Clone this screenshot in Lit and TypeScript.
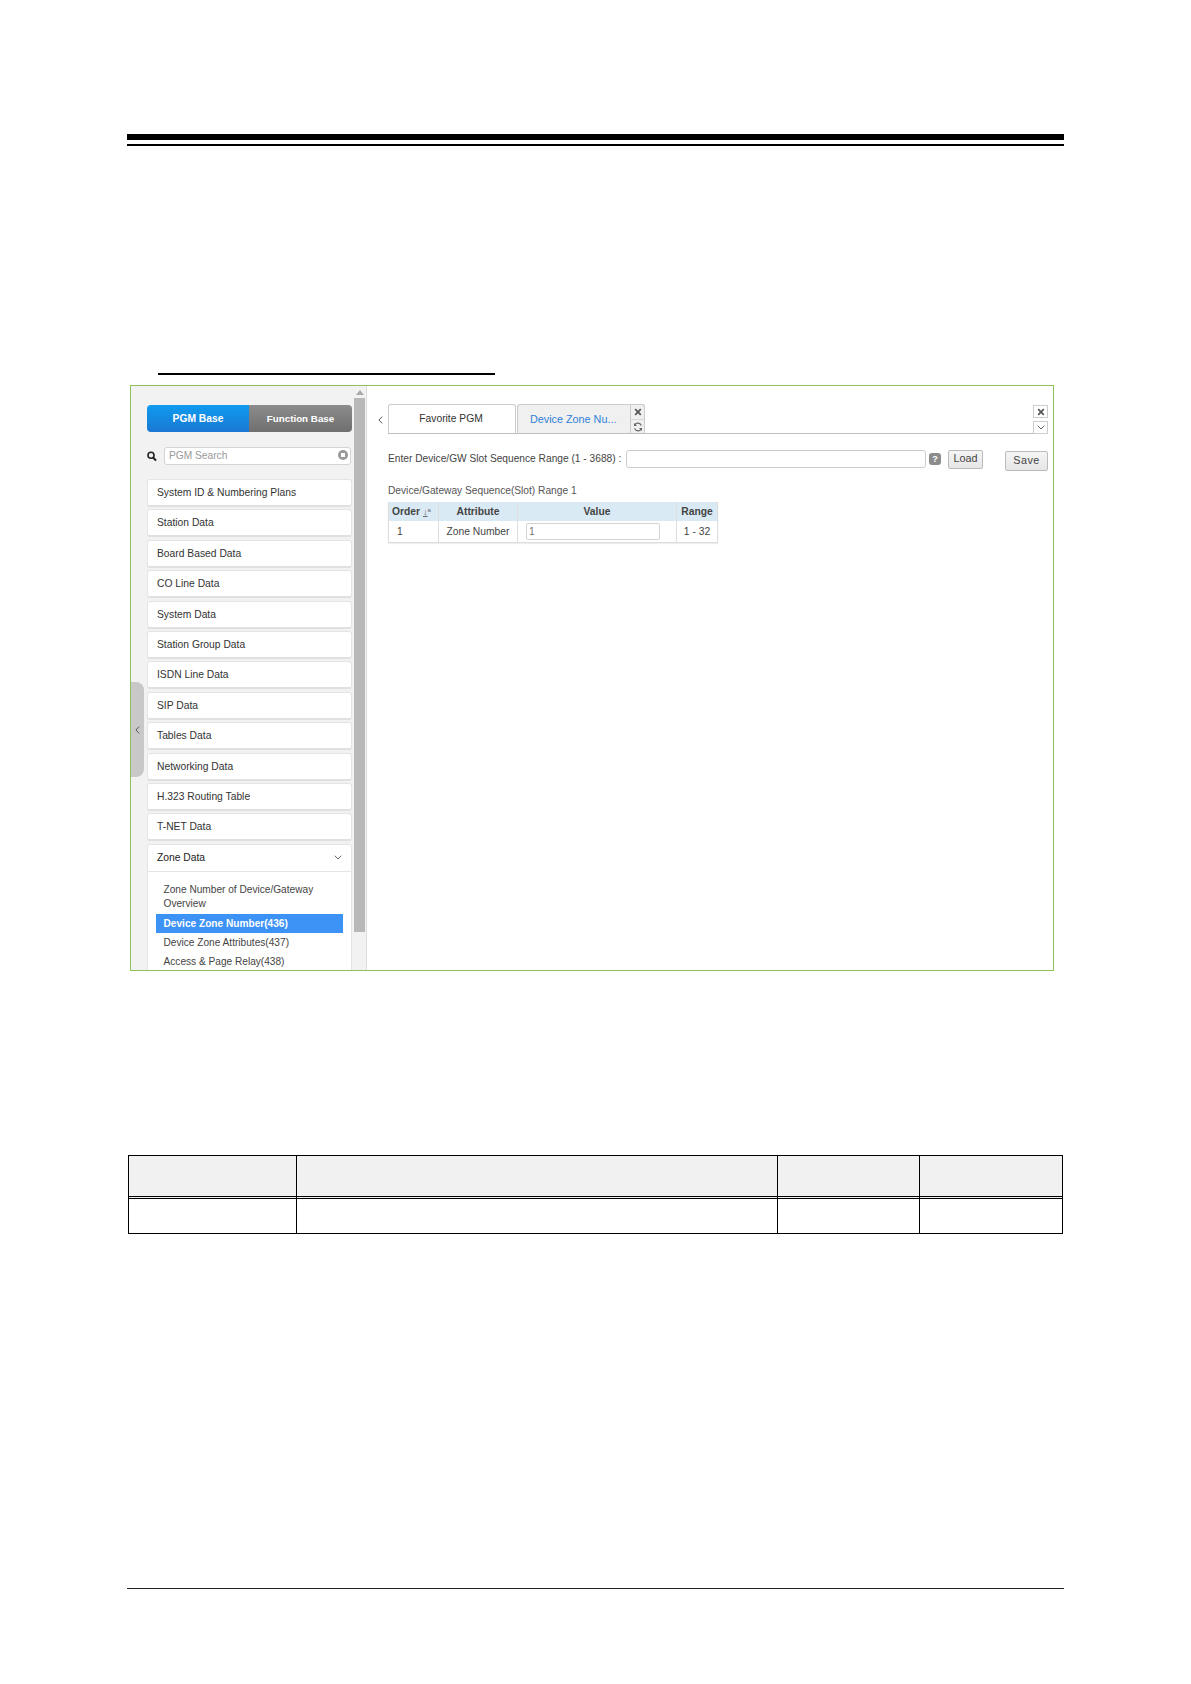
import { LitElement, html, css } from "lit";
import { customElement } from "lit/decorators.js";

const MENU = ["System ID & Numbering Plans","Station Data","Board Based Data","CO Line Data","System Data","Station Group Data","ISDN Line Data","SIP Data","Tables Data","Networking Data","H.323 Routing Table","T-NET Data"];

const closeIcon = html`<svg width="8" height="8" viewBox="0 0 8 8"><path d="M1.2 1.2l5.6 5.6M6.8 1.2L1.2 6.8" fill="none" stroke="#555" stroke-width="1.7"/></svg>`;
const chevDown = html`<svg width="8" height="5" viewBox="0 0 8 5"><path d="M.7.7 4 4 7.3.7" fill="none" stroke="#666" stroke-width="1"/></svg>`;
const chevLeft = html`<svg width="5" height="8" viewBox="0 0 5 8"><path d="M4.2.6.9 4l3.3 3.4" fill="none" stroke="#555" stroke-width="1"/></svg>`;
const refresh = html`<svg width="10" height="10" viewBox="0 0 10 10"><path d="M8.4 3.6A3.7 3.7 0 0 0 1.9 2.7M1.6 6.4A3.7 3.7 0 0 0 8.1 7.3" fill="none" stroke="#666" stroke-width="1.2"/><path d="M1 1v3h3zM9 9V6H6z" fill="#666"/></svg>`;

@customElement("app-root")
export class AppRoot extends LitElement {
  static styles = css`
    :host { display: block; width: 1191px; height: 1684px; background: #fff; font-family: "Liberation Sans", Arial, sans-serif; color: #333; overflow: hidden; }
    * { box-sizing: border-box; }
    .page { padding: 134px 127px 0 127px; width: 1191px; display: flex; flex-direction: column; }
    .thick { height: 6px; background: #000; width: 937px; }
    .thin { height: 2px; background: #000; width: 937px; margin-top: 4px; }
    .head-rule { height: 2px; background: #000; width: 337px; margin: 227px 0 0 31px; }
    .shot { position: relative; margin: 10px 0 0 3px; width: 924px; height: 586px; border: 1px solid #8dc45a; display: flex; }
    .side { width: 236px; flex: none; background: #f2f2f2; border-right: 1px solid #dcdcdc; position: relative; padding: 19px 15px 0 16px; overflow: hidden; }
    .pull { position: absolute; left: 0; top: 296px; width: 13px; height: 95px; background: #c8c8c8; border-radius: 0 8px 8px 0; display: flex; align-items: center; justify-content: center; }
    .sb { position: absolute; right: 1px; top: 0; bottom: 0; width: 11px; display: flex; flex-direction: column; align-items: center; }
    .sb .up { width: 0; height: 0; border: 4px solid transparent; border-bottom: 5px solid #aaa; border-top: 0; margin-top: 4px; margin-bottom: 3px; }
    .sb .thumb { width: 11px; height: 534px; background: #b8b8b8; }
    .seg { display: flex; width: 205px; height: 27px; border-radius: 4px; overflow: hidden; color: #fff; font-weight: bold; }
    .seg div { display: flex; align-items: center; justify-content: center; padding-bottom: 1px; }
    .seg .on { width: 102px; font-size: 10.3px; background: linear-gradient(#0f9bf0, #1a78d2); }
    .seg .off { flex: 1; font-size: 9.8px; background: linear-gradient(#8c8c8c, #6f6f6f); }
    .search { display: flex; align-items: center; height: 18px; margin-top: 15px; gap: 7px; }
    .search svg { flex: none; }
    .sinput { position: relative; flex: 1; height: 18px; background: #fff; border: 1px solid #d4d4d4; border-radius: 3px; color: #999; font-size: 10.2px; padding-left: 4px; line-height: 15px; }
    .sclear { position: absolute; right: 2px; top: 2px; width: 10px; height: 10px; border-radius: 50%; background: #999; display: flex; align-items: center; justify-content: center; }
    .sclear i { width: 4px; height: 4px; background: #fff; display: block; }
    .menu { margin-top: 14px; display: flex; flex-direction: column; gap: 2.4px; width: 205px; }
    .item { height: 28px; background: #fff; border: 1px solid #e4e4e4; border-bottom: 2px solid #e0e0e0; border-radius: 3px; font-size: 10.3px; line-height: 25px; padding-left: 9px; color: #333; flex: none; }
    .open { background: #fff; border: 1px solid #e4e4e4; border-radius: 3px 3px 0 0; flex: none; height: 140px; overflow: hidden; }
    .open .title { height: 27px; padding: 0 9px 1px; font-size: 10.3px; color: #222; border-bottom: 1px solid #e4e4e4; display: flex; justify-content: space-between; align-items: center; }
    .subs { padding: 11px 8px 0 8px; font-size: 10.15px; color: #444; }
    .sub { padding-left: 7.5px; line-height: 19px; height: 19px; white-space: nowrap; }
    .sub.two { height: 29px; line-height: 14.3px; margin-bottom: 2.5px; white-space: normal; }
    .sub.sel { background: #3d92f5; color: #fff; font-weight: bold; }
    .main { flex: 1; position: relative; padding: 19px 5px 0 21px; min-width: 0; }
    .tabbar { display: flex; align-items: flex-end; height: 29px; border-bottom: 1px solid #bfbfbf; position: relative; }
    .tback { position: absolute; left: -10px; top: 11px; display: flex; }
    .tab { height: 29px; border: 1px solid #ccc; border-bottom: none; border-radius: 3px 3px 0 0; font-size: 10.3px; display: flex; align-items: center; padding-bottom: 1px; }
    .tab.fav { width: 128px; background: #fff; color: #333; justify-content: center; padding-right: 2px; }
    .tab.cur { width: 128px; margin-left: 1px; background: #f0f0f0; color: #2f80d8; padding-left: 12px; position: relative; font-size: 10.8px; white-space: nowrap; }
    .tabctl { position: absolute; right: -1px; top: -1px; width: 15px; height: 29px; border: 1px solid #ccc; border-bottom: none; border-radius: 0 3px 0 0; display: flex; flex-direction: column; background: #f0f0f0; }
    .tabctl span { height: 14px; display: flex; align-items: center; justify-content: center; }
    .tabctl span + span { border-top: 1px solid #d8d8d8; }
    .winctl { position: absolute; right: 0; top: 0; display: flex; flex-direction: column; gap: 3px; }
    .winctl span { width: 15px; height: 13px; border: 1px solid #ccc; background: #fff; display: flex; align-items: center; justify-content: center; }
    .rangerow { display: flex; align-items: center; height: 18px; margin-top: 16px; font-size: 10.2px; color: #444; white-space: nowrap; position: relative; }
    .rlabel { width: 238px; flex: none; padding-bottom: 1px; }
    .rinput { width: 300px; height: 18px; border: 1px solid #ccc; border-radius: 3px; background: #fff; }
    .q { width: 12px; height: 12px; background: #8c8c8c; color: #fff; font-size: 9px; font-weight: bold; border-radius: 3px; margin-left: 3px; text-align: center; line-height: 12px; }
    .btn { border: 1px solid #bbb; border-radius: 2px; background: linear-gradient(#f5f5f5, #e6e6e6); color: #444; font-size: 10.8px; display: flex; align-items: center; justify-content: center; padding-bottom: 2px; }
    .load { width: 35px; height: 19px; margin-left: 7px; }
    .save { width: 43px; height: 20px; position: absolute; right: 0; top: 1px; letter-spacing: .5px; }
    .cap { font-size: 10.2px; color: #555; margin-top: 15px; line-height: 14px; padding-top: 1px; }
    .dt { display: grid; grid-template-columns: 51px 79px 159px 41px; width: 330px; margin-top: 4px; font-size: 10.3px; border-bottom: 1px solid #ddd; box-shadow: 0 1px 1px #eee; }
    .dt > div { display: flex; align-items: center; justify-content: center; border-right: 1px solid #ddd; }
    .dt .h { height: 19px; background: #d9eaf5; font-weight: bold; color: #444; }
    .dt .c { height: 21px; color: #444; }
    .dt .first { border-left: 1px solid #ddd; }
    .dt .h.first { justify-content: flex-start; padding-left: 3px; white-space: nowrap; gap: 3px; }
    .dt .c.first { justify-content: flex-start; padding-left: 8px; }
    .dt .c.val { justify-content: flex-start; padding-left: 8px; }
    .vinput { width: 134px; height: 17px; border: 1px solid #d4d4d4; border-radius: 2px; color: #777; padding-left: 2px; line-height: 15px; }
    .sort { font-size: 9px; font-weight: normal; color: #666; display: flex; align-items: flex-start; }
    .sort sup { font-size: 6px; line-height: 6px; vertical-align: baseline; }
    .tbl { display: grid; grid-template-columns: 168px 481px 142px 142px; width: 935px; margin: 184px 0 0 1px; border: 1px solid #000; }
    .tbl > div { border-right: 1px solid #000; }
    .tbl > div:nth-child(4n) { border-right: none; }
    .tbl .th { height: 43px; background: #f1f1f1; border-bottom: 3px double #000; }
    .tbl .td { height: 34px; }
    .foot { height: 1px; background: #222; width: 937px; margin-top: 354px; }
  `;

  render() {
    return html`<div class="page">
      <div class="thick"></div><div class="thin"></div>
      <div class="head-rule"></div>
      <div class="shot">
        <div class="side">
          <div class="seg"><div class="on">PGM Base</div><div class="off">Function Base</div></div>
          <div class="search">
            <svg width="10" height="11" viewBox="0 0 10 11"><circle cx="4" cy="4.2" r="3" fill="none" stroke="#222" stroke-width="1.6"/><path d="M6.2 6.5 9 9.6" stroke="#222" stroke-width="2"/></svg>
            <div class="sinput">PGM Search<span class="sclear"><i></i></span></div>
          </div>
          <div class="menu">
            ${MENU.map(m => html`<div class="item">${m}</div>`)}
            <div class="open">
              <div class="title"><span>Zone Data</span>${chevDown}</div>
              <div class="subs">
                <div class="sub two">Zone Number of Device/Gateway Overview</div>
                <div class="sub sel">Device Zone Number(436)</div>
                <div class="sub">Device Zone Attributes(437)</div>
                <div class="sub">Access &amp; Page Relay(438)</div>
              </div>
            </div>
          </div>
          <div class="pull">${chevLeft}</div>
          <div class="sb"><div class="up"></div><div class="thumb"></div></div>
        </div>
        <div class="main">
          <div class="tabbar">
            <span class="tback">${chevLeft}</span>
            <div class="tab fav">Favorite PGM</div>
            <div class="tab cur">Device Zone Nu...<div class="tabctl"><span>${closeIcon}</span><span>${refresh}</span></div></div>
            <div class="winctl"><span>${closeIcon}</span><span>${chevDown}</span></div>
          </div>
          <div class="rangerow"><span class="rlabel">Enter Device/GW Slot Sequence Range (1 - 3688) :</span><div class="rinput"></div><div class="q">?</div><div class="btn load">Load</div><div class="btn save">Save</div></div>
          <div class="cap">Device/Gateway Sequence(Slot) Range 1</div>
          <div class="dt">
            <div class="h first">Order <span class="sort"><u>↓</u><sup>a</sup></span></div><div class="h">Attribute</div><div class="h">Value</div><div class="h">Range</div>
            <div class="c first">1</div><div class="c">Zone Number</div><div class="c val"><div class="vinput">1</div></div><div class="c">1 - 32</div>
          </div>
        </div>
      </div>
      <div class="tbl">
        <div class="th"></div><div class="th"></div><div class="th"></div><div class="th"></div>
        <div class="td"></div><div class="td"></div><div class="td"></div><div class="td"></div>
      </div>
      <div class="foot"></div>
    </div>`;
  }
}
